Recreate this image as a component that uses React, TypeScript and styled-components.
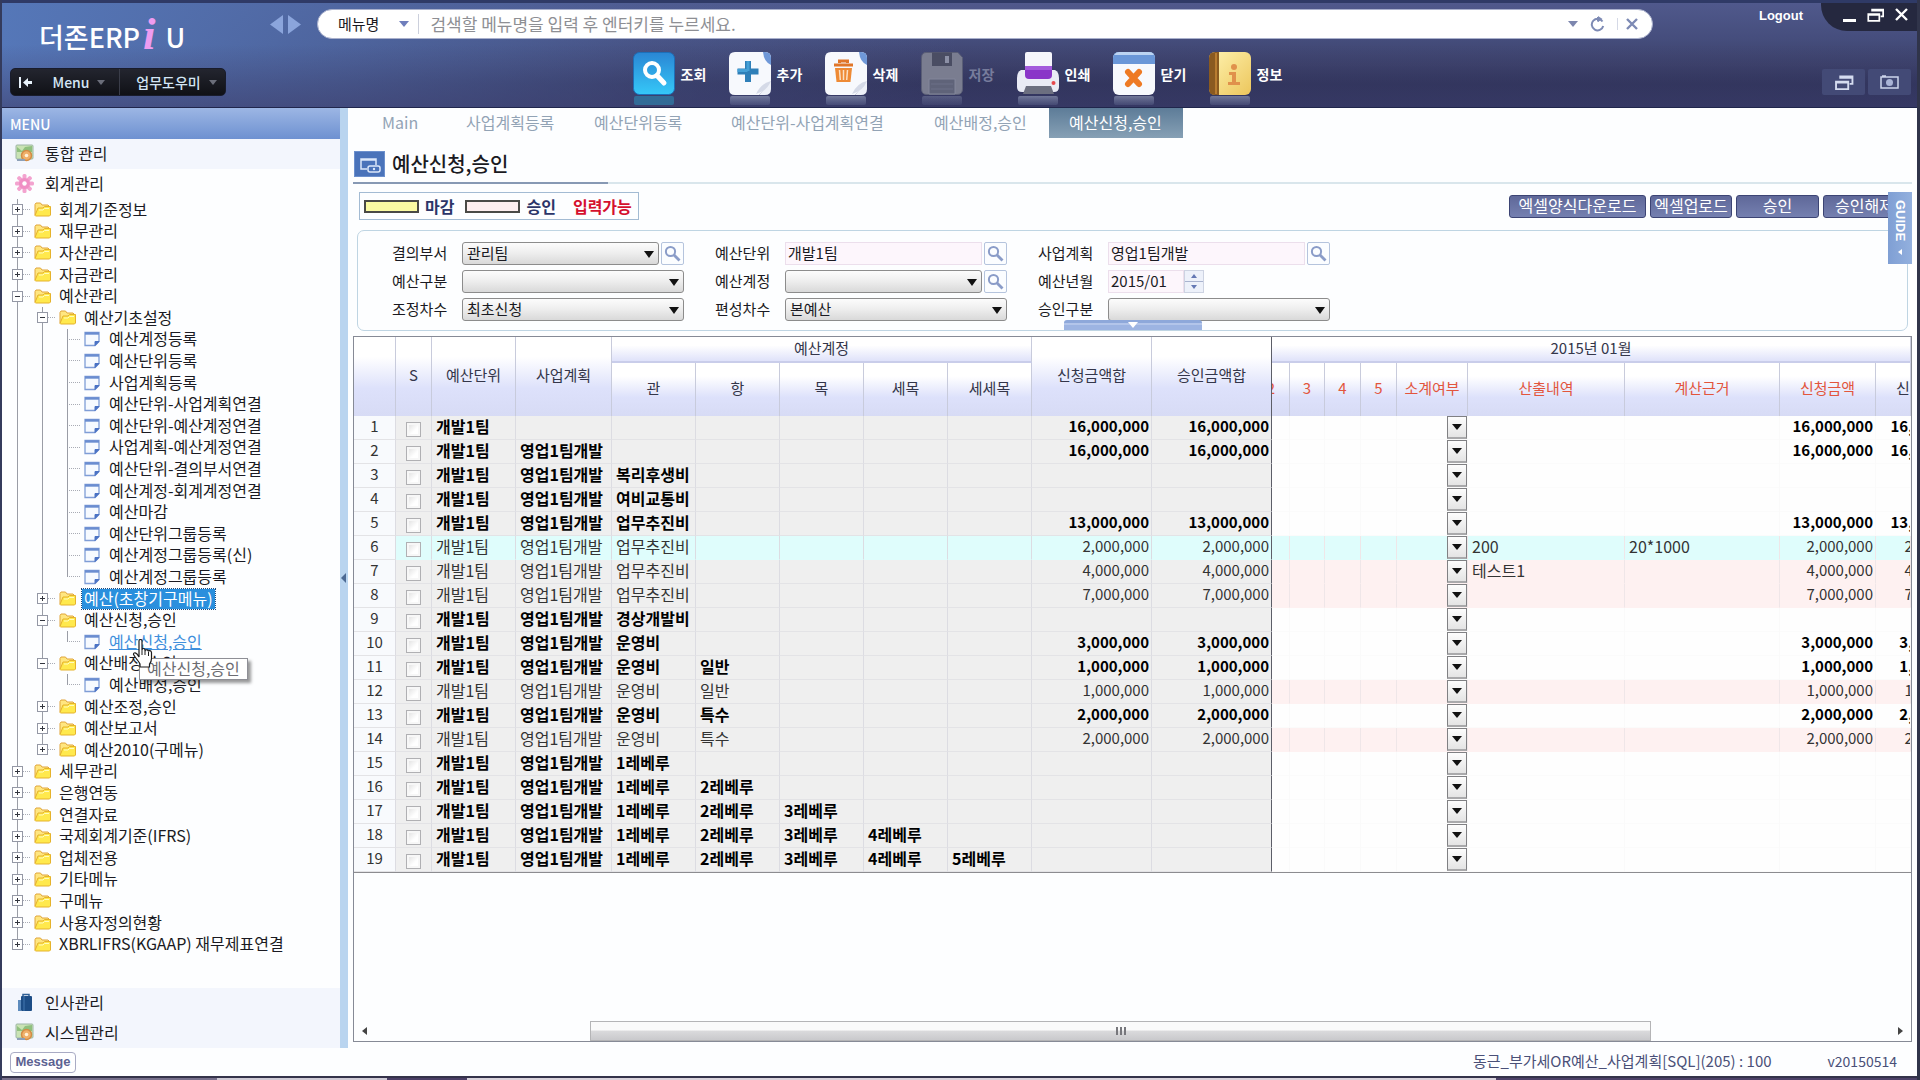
import React from "react";
import styled, { createGlobalStyle, css } from "styled-components";

const Global = createGlobalStyle`
  *, *::before, *::after { box-sizing: border-box; }
  body { margin: 0; }
  body, button, input, select, table {
    font-family: "Noto Sans CJK KR", "Noto Sans", sans-serif;
    font-size: 16px;
    line-height: 20px;
    color: #1a1a22;
  }
  button { padding: 0; border: 0; background: none; cursor: pointer; white-space: nowrap; }
  a { color: inherit; text-decoration: none; }
  ul { margin: 0; padding: 0; list-style: none; }
  svg { display: block; flex: none; }
`;

const Frame = styled.div`
  min-height: 100vh;
  display: flex;
  flex-direction: column;
  background: #fdfeff;
  border-left: 2px solid #343b5c;
  border-right: 3px solid #30344a;
`;

/* ---------- header ---------- */
const Header = styled.header`
  display: flex;
  height: 108px;
  flex: none;
  border-top: 3px solid #2f3a66;
  border-bottom: 1px solid #20264c;
  background:
    linear-gradient(180deg, rgba(62, 66, 114, 0) 40%, rgba(62, 62, 108, 0.6) 100%),
    linear-gradient(90deg, #5577b8 0%, rgba(80, 106, 166, 0.8) 18%, rgba(80, 100, 158, 0.35) 34%, rgba(80, 100, 158, 0) 50%),
    linear-gradient(180deg, #50598c 0%, #454d7c 35%, #3b4069 60%, #2c3156 78%, #2a3058 100%);
`;

const Brand = styled.div`
  width: 258px;
  padding: 9px 0 0 8px;
  display: flex;
  flex-direction: column;
`;

const Logo = styled.h1`
  margin: 0 0 0 29px;
  height: 56px;
  padding-bottom: 6px;
  display: flex;
  align-items: center;
  font-size: 27px;
  line-height: 32px;
  font-weight: 500;
  color: #fff;
`;

const LogoI = styled.em`
  margin: 0 10px 6px 3px;
  font: italic bold 45px/40px "Liberation Serif", serif;
  color: #ee9cf0;
`;

const MenuBar = styled.nav`
  display: flex;
  align-items: center;
  width: 216px;
  height: 28px;
  border-radius: 5px;
  background: linear-gradient(180deg, #23252f, #101116);
  border: 1px solid #191c2c;
`;

const MenuButton = styled.button<{ $w: number }>`
  display: flex;
  align-items: center;
  justify-content: center;
  gap: 8px;
  height: 26px;
  width: ${(p) => p.$w}px;
  font-size: 14px;
  font-weight: 500;
  color: #d5e6f5;
  & + & + & {
    padding-left: 8px;
    border-left: 1px solid #3a3d49;
  }
`;

const Caret = styled.span<{ $color?: string; $size?: number }>`
  display: block;
  width: 0;
  height: 0;
  flex: none;
  border-left: ${(p) => p.$size ?? 5}px solid transparent;
  border-right: ${(p) => p.$size ?? 5}px solid transparent;
  border-top: ${(p) => (p.$size ?? 5) + 1}px solid ${(p) => p.$color ?? "#8088a8"};
`;

const Center = styled.div`
  flex: 1;
  min-width: 0;
  display: flex;
  flex-direction: column;
  padding: 6px 0 0 10px;
`;

const SearchRow = styled.div`
  display: flex;
  align-items: center;
  gap: 16px;
`;

const HistoryButtons = styled.div`
  display: flex;
  gap: 5px;
`;

const SearchBox = styled.form`
  flex: 1;
  display: flex;
  align-items: center;
  height: 30px;
  padding: 0 14px 0 20px;
  border-radius: 15px;
  background: #fff;
  border: 1px solid #a9b0cc;
`;

const SearchKind = styled.button`
  display: flex;
  align-items: center;
  gap: 20px;
  padding-right: 9px;
  margin-right: 11px;
  border-right: 1px solid #ccd0dc;
  font-size: 15px;
`;

const SearchInput = styled.input`
  flex: 1;
  min-width: 0;
  padding: 0;
  border: 0;
  outline: 0;
  font-size: 17px;
  background: none;
  &::placeholder { color: #8e8f94; opacity: 1; }
`;

const SearchTools = styled.div`
  display: flex;
  align-items: center;
  gap: 12px;
  & > :last-child { padding-left: 8px; border-left: 1px solid #d5d9e6; }
`;

const ToolBar = styled.div`
  display: flex;
  justify-content: center;
  padding: 13px 8px 0 0;
  gap: 22px;
`;

const Tool = styled.button<{ $off?: boolean }>`
  display: flex;
  align-items: flex-start;
  gap: 6px;
  width: 74px;
  font-size: 14px;
  font-weight: 700;
  line-height: 44px;
  color: ${(p) => (p.$off ? "#777c9c" : "#fff")};
`;

const Corner = styled.div`
  width: 264px;
  display: flex;
  flex-direction: column;
  justify-content: space-between;
  align-items: flex-end;
  padding-bottom: 12px;
`;

const CornerTop = styled.div`
  display: flex;
  align-items: flex-start;
  gap: 18px;
`;

const Logout = styled.button`
  font: bold 13px/26px "Liberation Sans", sans-serif;
  color: #fff;
`;

const WindowButtons = styled.div`
  display: flex;
  align-items: center;
  gap: 11px;
  width: 96px;
  height: 28px;
  padding: 0 8px 5px 22px;
  border-radius: 0 0 0 26px;
  background: #25283f;
`;

const SmallButtons = styled.div`
  display: flex;
  gap: 3px;
  margin-right: 6px;
`;

const SmallButton = styled.button`
  display: grid;
  place-items: center;
  width: 43px;
  height: 26px;
  background: #434a76;
  border-radius: 2px;
`;

/* ---------- sidebar ---------- */
const Body = styled.div`
  flex: 1;
  display: flex;
  min-height: 0;
`;

const Sidebar = styled.aside`
  width: 338px;
  flex: none;
  display: flex;
  flex-direction: column;
`;

const SideTitle = styled.h2`
  margin: 0;
  height: 31px;
  padding-left: 8px;
  font-size: 14px;
  line-height: 32px;
  font-weight: 500;
  color: #fff;
  background: linear-gradient(180deg, #9cb6e4, #6e91d1);
`;

const Module = styled.button<{ $tint?: boolean }>`
  display: flex;
  align-items: center;
  gap: 11px;
  height: 30px;
  padding: 0 0 2px 13px;
  text-align: left;
  background: ${(p) => (p.$tint ? "#f3f6fd" : "transparent")};
`;

const Tree = styled.ul`
  flex: 1;
  display: grid;
  grid-auto-rows: 1fr;
  padding: 0 0 33px 3px;
`;

const TreeRow = styled.li`
  position: relative;
  display: flex;
  align-items: center;
  min-height: 0;
`;

const Guide = styled.span<{ $half?: boolean; $line?: boolean; $branch?: boolean }>`
  width: 25px;
  align-self: stretch;
  flex: none;
  display: grid;
  place-items: center;
  background:
    linear-gradient(#9a9da6, #9a9da6) 12px 0 / ${(p) => (p.$line ? "1px" : "0")} ${(p) => (p.$half ? "50%" : "100%")} no-repeat,
    repeating-linear-gradient(90deg, #a9acb5 0 1px, transparent 1px 2px) 12px 50% / ${(p) => (p.$branch ? "13px 1px" : "0 0")} no-repeat;
`;

const Expander = styled.button`
  display: grid;
  place-items: center;
  width: 11px;
  height: 11px;
  background: #fff;
  border: 1px solid #9498a5;
`;

const TreeIcon = styled.span`
  width: 29px;
  padding-left: 4px;
  flex: none;
`;

const TreeLink = styled.a<{ $selected?: boolean; $hot?: boolean }>`
  padding-bottom: 2px;
  line-height: 18px;
  white-space: nowrap;
  ${(p) => p.$selected && css`
    margin-left: -2px;
    padding: 0 2px 2px;
    color: #fff;
    background: #2a8fdd;
    outline: 1px dotted #1a4a80;
  `}
  ${(p) => p.$hot && css`
    color: #3f8fdc;
    text-decoration: underline;
  `}
`;

const Tooltip = styled.span`
  position: absolute;
  left: 134px;
  top: 27px;
  z-index: 2;
  height: 22px;
  padding: 0 7px;
  line-height: 18px;
  color: #6c6c72;
  background: #fff;
  border: 1px solid #8e8f96;
  box-shadow: 3px 3px 3px rgba(0, 0, 0, 0.4);
  white-space: nowrap;
`;

const Hand = styled.span`
  position: absolute;
  left: 127px;
  top: 8px;
  z-index: 3;
`;

const Splitter = styled.div`
  width: 8px;
  flex: none;
  display: flex;
  align-items: center;
  background: #b9d4ef;
`;

/* ---------- work area ---------- */
const Main = styled.main`
  position: relative;
  flex: 1;
  min-width: 0;
  display: flex;
  flex-direction: column;
  padding: 0 5px 6px;
`;

const Tabs = styled.nav`
  display: flex;
  height: 30px;
  padding-left: 9px;
`;

const Tab = styled.button<{ $w: number; $on?: boolean }>`
  width: ${(p) => p.$w}px;
  padding: 0 0 2px 20px;
  text-align: left;
  color: ${(p) => (p.$on ? "#fff" : "#92a3b5")};
  background: ${(p) => (p.$on ? "linear-gradient(180deg, #5d7c98, #86a0b5)" : "none")};
`;

const TitleRow = styled.div`
  display: flex;
  align-items: center;
  gap: 7px;
  height: 44px;
  padding: 9px 0 0 1px;
  svg { margin-bottom: 1px; }
  h2 { margin: 0 0 2px; font-size: 20px; line-height: 26px; font-weight: 500; }
`;

const Rule = styled.div`
  flex: none;
  height: 2px;
  background: linear-gradient(90deg, #8799b4 255px, #d9e6ec 255px);
`;

const ActionRow = styled.div`
  display: flex;
  justify-content: space-between;
  align-items: center;
  height: 44px;
  padding: 0 6px 0 6px;
`;

const Legend = styled.div`
  display: flex;
  align-items: center;
  height: 28px;
  padding: 0 6px 0 4px;
  border: 1px solid #a3bbd3;
  font-weight: 700;
  color: #2c3568;
`;

const Swatch = styled.span<{ $c: string }>`
  width: 55px;
  height: 13px;
  margin-right: 6px;
  background: ${(p) => p.$c};
  border: 2px solid #4a4a46;
`;

const LegendText = styled.span<{ $red?: boolean }>`
  margin-right: ${(p) => (p.$red ? 0 : 11)}px;
  margin-left: ${(p) => (p.$red ? 6 : 0)}px;
  color: ${(p) => (p.$red ? "#d5102e" : "inherit")};
`;

const Actions = styled.div`
  display: flex;
  gap: 4px;
`;

const ActionButton = styled.button<{ $w: number }>`
  width: ${(p) => p.$w}px;
  height: 23px;
  padding-bottom: 2px;
  line-height: 18px;
  color: #fff;
  font-size: 16px;
  border: 1px solid #3c4474;
  border-radius: 3px;
  background: linear-gradient(180deg, #5f6899, #7580b0);
`;

const GuideTab = styled.button`
  position: absolute;
  right: 5px;
  top: 84px;
  z-index: 2;
  display: flex;
  align-items: center;
  justify-content: center;
  gap: 7px;
  width: 24px;
  height: 72px;
  writing-mode: vertical-rl;
  font: bold 13px/22px "Liberation Sans", sans-serif;
  color: #fff;
  background: linear-gradient(90deg, #7f9fd4, #93b0de);
`;

const Panel = styled.section`
  position: relative;
  display: grid;
  grid-template-columns: repeat(3, 292px);
  column-gap: 31px;
  row-gap: 5px;
  height: 101px;
  margin: 2px 4px 5px 4px;
  padding: 11px 0 0 34px;
  align-content: start;
  border: 1px solid #bfd5e3;
  border-radius: 7px;
`;

const Field = styled.div`
  display: flex;
  align-items: center;
  height: 23px;
  label {
    width: 70px;
    flex: none;
    padding-bottom: 2px;
    font-size: 15px;
  }
`;

const SelectBox = styled.span`
  position: relative;
  flex: 1;
  display: flex;
  &::after {
    content: "";
    position: absolute;
    right: 5px;
    top: 9px;
    border: 5px solid transparent;
    border-top: 7px solid #111;
    border-bottom: 0;
    pointer-events: none;
  }
`;

const Select = styled.select`
  appearance: none;
  flex: 1;
  min-width: 0;
  height: 23px;
  padding: 0 20px 1px 4px;
  font-size: 15px;
  line-height: 20px;
  border: 1px solid #8c8c8c;
  border-radius: 3px;
  background: linear-gradient(180deg, #fcfcfc 0%, #ededed 50%, #d9d9d9 100%);
`;

const TextInput = styled.input<{ $short?: boolean }>`
  flex: ${(p) => (p.$short ? "none" : "1")};
  width: ${(p) => (p.$short ? "76px" : "auto")};
  min-width: 0;
  height: 23px;
  padding: 0 2px 2px;
  font-size: 15px;
  border: 1px solid #ecdfec;
  background: #fdf6fc;
`;

const LookupButton = styled.button`
  display: grid;
  place-items: center;
  width: 23px;
  height: 23px;
  margin-left: 2px;
  border: 1px solid #b5c4dd;
  border-radius: 2px;
  background: #fbfdff;
`;

const Spin = styled.span`
  display: flex;
  flex-direction: column;
  width: 20px;
  height: 23px;
  border: 1px solid #cdd3e2;
  button {
    flex: 1;
    display: grid;
    place-items: center;
    background: #edf1fa;
  }
  button + button { border-top: 1px solid #a9b3cf; }
`;

const PullTab = styled.button`
  position: absolute;
  left: 706px;
  bottom: 0;
  width: 138px;
  height: 10px;
  display: flex;
  justify-content: center;
  align-items: center;
  border-radius: 3px 3px 0 0;
  background: linear-gradient(180deg, #8ea8da 0 3px, #b3c5ea 3px 5px, #9db4e2 5px);
`;

/* ---------- data grid ---------- */
const GridBox = styled.section`
  flex: 1;
  display: flex;
  flex-direction: column;
  justify-content: space-between;
  border: 1px solid #868a96;
  overflow: hidden;
`;

const Table = styled.table`
  width: 100%;
  table-layout: fixed;
  border-collapse: separate;
  border-spacing: 0;
  border-bottom: 1px solid #8c8c90;
`;

const Th = styled.th<{ $red?: boolean; $edge?: boolean; $band?: boolean }>`
  padding: 0 0 ${(p) => (p.$band ? 2 : 4)}px;
  height: ${(p) => (p.$band ? 26 : 53)}px;
  font-size: 15px;
  font-weight: 400;
  overflow: hidden;
  white-space: nowrap;
  color: ${(p) => (p.$red ? "#e2553d" : "#34364a")};
  border-right: 1px solid ${(p) => (p.$edge ? "#5c5e68" : "#c8cbdc")};
  border-bottom: ${(p) => (p.$band ? "2px solid #c9cdea" : "0")};
  background: ${(p) =>
    p.$band
      ? "linear-gradient(180deg, #ffffff 35%, #dfe2fa)"
      : "linear-gradient(180deg, #ffffff 25%, #dde1fb 65%, #d7dbf5)"};
`;

type Tone = "line" | "frozen" | "open";

const Td = styled.td<{ $tone: Tone; $bold?: boolean; $right?: boolean; $edge?: boolean; $fill?: string; $control?: boolean }>`
  height: 24px;
  padding: 0 ${(p) => (p.$right ? 2 : 0)}px ${(p) => (p.$control ? 0 : 3)}px ${(p) => (p.$right || p.$tone === "line" ? 0 : 4)}px;
  overflow: hidden;
  white-space: nowrap;
  font-size: ${(p) => (p.$right || p.$tone === "line" ? 15 : 16)}px;
  font-weight: ${(p) => (p.$bold ? 700 : 400)};
  text-align: ${(p) => (p.$right ? "right" : p.$tone === "line" ? "center" : "left")};
  color: ${(p) => (p.$bold ? "#000" : "#333")};
  background: ${(p) => p.$fill ?? (p.$tone === "line" ? "#f8fafd" : p.$tone === "frozen" ? "#efefef" : "#fefefe")};
  border-right: 1px solid ${(p) => (p.$edge ? "#5c5e68" : p.$tone === "open" ? (p.$fill ? "#efe6e8" : "#fafafa") : "#dcdce2")};
  border-bottom: 1px solid ${(p) => (p.$tone === "open" ? p.$fill ?? "#fbfbfb" : p.$fill ?? "#e3e3e6")};
`;

const Check = styled.input`
  appearance: none;
  display: block;
  width: 15px;
  height: 15px;
  margin: 3px 0 0 6px;
  border: 1px solid #b0b0b3;
  background: linear-gradient(135deg, #dcdcdc, #ffffff 60%);
  box-shadow: inset 0 0 0 2px #f7f7f7;
`;

const DropButton = styled.button`
  display: flex;
  align-items: center;
  justify-content: center;
  width: 20px;
  height: 23px;
  margin-left: auto;
  border: 1px solid #808083;
  border-bottom: 2px solid #a9a9ab;
  background: linear-gradient(180deg, #fdfdfd, #e4e4e4);
`;

/* Content of a column that continues beyond a clipped edge. */
const Wide = styled.div<{ $w: number; $from: "left" | "right"; $right?: boolean }>`
  width: ${(p) => p.$w}px;
  margin-left: ${(p) => (p.$from === "left" ? -19 : 0)}px;
  font-size: 15px;
  text-align: ${(p) => (p.$right ? "right" : "center")};
`;

const ScrollBar = styled.div`
  display: flex;
  align-items: center;
  justify-content: space-between;
  height: 20px;
  padding: 0 8px;
`;

const Track = styled.div`
  flex: 1;
  padding: 0 247px 0 223px;
`;

const Thumb = styled.div`
  display: flex;
  justify-content: center;
  align-items: center;
  gap: 2px;
  height: 20px;
  border: 1px solid #b4b4b6;
  background: linear-gradient(180deg, #fafafa 0 45%, #dadadc 50%, #c9c9cc);
  i { width: 2px; height: 8px; background: #77777c; }
`;

/* ---------- footer ---------- */
const Footer = styled.footer`
  display: flex;
  align-items: center;
  height: 28px;
  padding: 0 20px 2px 8px;
  font-size: 15px;
  color: #4a5078;
`;

const Message = styled.button`
  width: 66px;
  height: 21px;
  margin: 2px auto 0 0;
  font: bold 13px/18px "Liberation Sans", sans-serif;
  color: #5c6292;
  border: 1px solid #a9abc4;
  border-radius: 4px;
  background: #fff;
`;

const Version = styled.span`
  margin-left: 56px;
  font-size: 14px;
`;

const Strip = styled.div`
  flex: none;
  height: 4px;
  border-top: 2px solid #34334a;
  background: linear-gradient(90deg, #77708c 215px, #cfcbd6 215px 385px, #4b3f66 385px 465px, #d9d3dc 465px 78%, #4d4168 78%);
`;

/* ---------- drawings ---------- */
const Tri = ({ d, w, h, c }: { d: string; w: number; h: number; c: string }) => (
  <svg width={w} height={h} viewBox={`0 0 ${w} ${h}`} aria-hidden="true"><path d={d} fill={c} /></svg>
);

const Lens = ({ c = "#8a9cc8", s = 17 }: { c?: string; s?: number }) => (
  <svg width={s} height={s} viewBox="0 0 17 17" fill="none" stroke={c} aria-hidden="true">
    <circle cx="6.5" cy="6.5" r="4.6" strokeWidth="2" />
    <path d="M10 10l5.5 5.5" strokeWidth="2.8" />
  </svg>
);

const Folder = () => (
  <svg width="17" height="15" viewBox="0 0 17 15" aria-hidden="true">
    <path d="M1 13V2.5L2 1h4.500l1.500 2H14l1 1v2" fill="#ffe680" stroke="#e0a53a" />
    <path d="M1 13.500L4 6h5l1.500-1.500H16.500V13l-1 1H1.500z" fill="#ffe94d" stroke="#e5b22c" />
    <path d="M5 8h4l1.500-1.500H15" fill="none" stroke="#fffbc0" />
  </svg>
);

const Doc = () => (
  <svg width="16" height="16" viewBox="0 0 16 16" aria-hidden="true">
    <path d="M1 1.500h14v9l-4 4H1z" fill="#f6faff" stroke="#7f9dd6" strokeWidth="1.300" />
    <path d="M1 2.500h14" stroke="#6a8dd0" strokeWidth="2.400" />
    <path d="M15 10.500h-4v4z" fill="#4a72c4" stroke="#4a72c4" />
  </svg>
);

const PictureIcon = () => (
  <svg width="19" height="19" viewBox="0 0 19 19" aria-hidden="true">
    <rect x="1" y="1" width="17" height="14" rx="1" fill="#c9e3b4" stroke="#9db6a5" />
    <path d="M2 3l5 4 3-4 7-1v6H2z" fill="#8fc07e" />
    <circle cx="11.500" cy="11.500" r="5" fill="#f0b06a" stroke="#d28c45" strokeWidth="1.500" />
    <circle cx="11.500" cy="11.500" r="1.800" fill="#fff2d8" />
    <path d="M2 16h8" stroke="#8da0b8" strokeWidth="2" />
  </svg>
);

const FlowerIcon = () => (
  <svg width="19" height="19" viewBox="0 0 19 19" aria-hidden="true">
    {[0, 45, 90, 135, 180, 225, 270, 315].map((a) => (
      <rect key={a} x="7.500" y="0" width="4" height="7" rx="1.500" fill="#f3a3cf" transform={`rotate(${a} 9.500 9.500)`} />
    ))}
    <circle cx="9.500" cy="9.500" r="5.500" fill="#f08fc4" />
    <circle cx="9.500" cy="9.500" r="2.200" fill="#fff" />
  </svg>
);

const CaseIcon = () => (
  <svg width="19" height="19" viewBox="0 0 19 19" aria-hidden="true">
    <path d="M8 4V1.500h6V4" fill="none" stroke="#2e5e94" strokeWidth="1.500" />
    <rect x="6" y="3" width="11" height="15" rx="1" fill="#1d4d86" />
    <path d="M3 7h3v11H3z" fill="#5d8bbd" />
    <path d="M9 3v15" stroke="#4578b0" />
  </svg>
);

const Glyphs: Record<string, React.ReactNode> = {
  find: (
    <>
      <rect x="0.500" y="0.500" width="41" height="42" rx="6" fill="url(#gBlue)" stroke="#1d6fb8" />
      <circle cx="19" cy="18" r="7" fill="none" stroke="#fff" strokeWidth="4" />
      <path d="M24 23.500l7 7.500" stroke="#fff" strokeWidth="5" strokeLinecap="round" />
    </>
  ),
  add: (
    <>
      <Sheet />
      <path d="M19 9v21M8.500 19.500h21" stroke="#2e7fb8" strokeWidth="6" />
      <path d="M19 9v10M8.500 18.500h10" stroke="#45a0d6" strokeWidth="3" />
    </>
  ),
  del: (
    <>
      <Sheet />
      <path d="M9 13h19M14.500 11V9h8v2" fill="none" stroke="#e0762a" strokeWidth="3" />
      <path d="M10 16h17l-1.500 14h-14z" fill="#ee8a35" />
      <path d="M14.500 18l.8 10M18.500 18v10M22.500 18l-.8 10" stroke="#fbe0c4" strokeWidth="1.500" />
    </>
  ),
  save: (
    <>
      <path d="M5 .5h32l4.500 5V37q0 5.500-5.500 5.500H6Q.5 42.500.5 37V6Q.5.5 5 .5z" fill="#7a7d90" stroke="#5a5e76" />
      <path d="M11 .5h20V14H11z" fill="#4a4d63" />
      <rect x="24" y="4" width="4" height="7" fill="#8c90a6" />
      <path d="M8 27h26v15H8z" fill="#5f6379" stroke="#83879b" />
      <path d="M10 32h22M10 37h22" stroke="#6d7188" />
    </>
  ),
  print: (
    <>
      <rect x="8" y="0" width="27" height="20" rx="2" fill="#f5f6fb" />
      <path d="M4 18h34q4 2 4 8v9q0 5-5 5H5q-5 0-5-5v-9q0-6 4-8z" fill="#e9ebf5" />
      <path d="M8 14h27v9q0 4-4 4H12q-4 0-4-4z" fill="#8a35c8" />
      <path d="M8 14h27v4H8z" fill="#a35bdc" />
      <path d="M9 34h25l3 8H6z" fill="#6c6f80" />
      <circle cx="36.500" cy="31" r="2" fill="#e5484d" />
    </>
  ),
  close: (
    <>
      <rect x="0" y="0" width="42" height="43" rx="6" fill="#f7f9fd" />
      <path d="M0 12V6q0-6 6-6h30q6 0 6 6v6z" fill="#6a97d8" />
      <path d="M1 3q2-3 5-3h30q4 0 5 3z" fill="#bcd4f2" />
      <path d="M15 20l11 12M26 20l-11 12" stroke="#ee7a24" strokeWidth="6" strokeLinecap="round" />
    </>
  ),
  info: (
    <>
      <rect x="0" y="0" width="42" height="43" rx="6" fill="url(#gGold)" />
      <path d="M6 0h4v43H6q-6 0-6-6V6q0-6 6-6z" fill="#8a5a20" />
      <path d="M7 1v41" stroke="#b97c30" strokeWidth="2" />
      <circle cx="25" cy="15" r="3" fill="#e0914c" />
      <path d="M20 20h7v10h4v3H19v-3h4v-7h-3z" fill="#e0914c" />
    </>
  ),
};

function Sheet() {
  return (
    <>
      <path d="M6 0h30q6 0 6 6v25L30 43H6q-6 0-6-6V6q0-6 6-6z" fill="#f7f9fd" />
      <path d="M42 29v8q0 6-6 6h-6z" fill="#eef1f8" />
      <path d="M34 0h2q6 0 6 6v7q-7-3-8-13z" fill="#6f98d8" />
      <path d="M42 29q-10 2-15 13 11-3 15-13z" fill="#d5dae7" />
    </>
  );
}

const ToolGlyph = ({ kind }: { kind: string }) => (
  <svg width="42" height="53" viewBox="0 0 42 53" aria-hidden="true">
    <defs>
      <linearGradient id="gBlue" x1="0" y1="0" x2="0" y2="1">
        <stop offset="0" stopColor="#2a86d4" />
        <stop offset="1" stopColor="#35c8f8" />
      </linearGradient>
      <linearGradient id="gGold" x1="0" y1="0" x2="1" y2="1">
        <stop offset="0" stopColor="#fff3b0" />
        <stop offset="1" stopColor="#ecc65c" />
      </linearGradient>
      <linearGradient id="gFade" x1="0" y1="0" x2="0" y2="1">
        <stop offset="0" stopColor="#a9b2ca" stopOpacity="0.75" />
        <stop offset="1" stopColor="#8d9cc0" stopOpacity="0.25" />
      </linearGradient>
    </defs>
    {Glyphs[kind]}
    <rect x="1" y="44" width="40" height="9" rx="2" fill={kind === "find" ? "#2f7fa8" : "url(#gFade)"} opacity={kind === "save" ? 0.4 : 0.7} />
  </svg>
);

const Restore = ({ w, h, c }: { w: number; h: number; c: string }) => (
  <svg width={w} height={h} viewBox="0 0 20 16" fill="none" stroke={c} strokeWidth="2" aria-hidden="true">
    <path d="M6 4V1.500h13v8h-3M6 3h13" />
    <path d="M1.500 7h13v8h-13zM1.500 8h13" />
  </svg>
);

const HandCursor = () => (
  <svg width="22" height="29" viewBox="0 0 22 29" aria-hidden="true">
    <path
      d="M7 2q0-1.500 1.500-1.500T10 2v9q0-1.500 1.500-1.500T13 11v1q.5-1.500 2-1.200t1.200 1.700q.5-1 1.800-.8t1.500 1.800v6q0 3-2 5.500v3H8v-3q-1-2-3-4.500t-3.500-5q0-2 1.700-1.700T7 18z"
      fill="#fff" stroke="#1c1c1c" strokeWidth="1.200"
    />
    <path d="M10 11v5M13 12v4M16.500 13v4" stroke="#1c1c1c" />
  </svg>
);

/* ---------- data ---------- */
const tools = [
  ["find", "조회"], ["add", "추가"], ["del", "삭제"], ["save", "저장"],
  ["print", "인쇄"], ["close", "닫기"], ["info", "정보"],
];

type Node = { level: 0 | 1 | 2; text: string; open?: boolean; last?: boolean };
const leaf = (text: string, last = false): Node => ({ level: 2, text, last });
const sub = (text: string, open = false, last = false): Node => ({ level: 1, text, open, last });
const top = (text: string, open = false, last = false): Node => ({ level: 0, text, open, last });

const tree: Node[] = [
  top("회계기준정보"), top("재무관리"), top("자산관리"), top("자금관리"), top("예산관리", true),
  sub("예산기초설정", true),
  leaf("예산계정등록"), leaf("예산단위등록"), leaf("사업계획등록"), leaf("예산단위-사업계획연결"),
  leaf("예산단위-예산계정연결"), leaf("사업계획-예산계정연결"), leaf("예산단위-결의부서연결"),
  leaf("예산계정-회계계정연결"), leaf("예산마감"), leaf("예산단위그룹등록"),
  leaf("예산계정그룹등록(신)"), leaf("예산계정그룹등록", true),
  sub("예산(초창기구메뉴)"), sub("예산신청,승인", true), leaf("예산신청,승인", true),
  sub("예산배정,승인", true), leaf("예산배정,승인", true),
  sub("예산조정,승인"), sub("예산보고서"), sub("예산2010(구메뉴)", false, true),
  top("세무관리"), top("은행연동"), top("연결자료"), top("국제회계기준(IFRS)"), top("업체전용"),
  top("기타메뉴"), top("구메뉴"), top("사용자정의현황"), top("XBRLIFRS(KGAAP) 재무제표연결", false, true),
];

const tabs: [string, number][] = [
  ["Main", 84], ["사업계획등록", 128], ["예산단위등록", 137], ["예산단위-사업계획연결", 203],
  ["예산배정,승인", 135], ["예산신청,승인", 134],
];

const columns = [42, 36, 84, 96, 84, 84, 84, 84, 84, 120, 120, 18, 35, 36, 36, 71, 157, 155, 96];

type Row = { plan?: boolean; acct?: string[]; sum?: string; bold?: boolean; note?: string; basis?: string; fill?: string };
const CYAN = "#dffdfc";
const PINK = "#fef1f1";
const rows: Row[] = [
  { plan: false, sum: "16,000,000", bold: true },
  { sum: "16,000,000", bold: true },
  { acct: ["복리후생비"], bold: true },
  { acct: ["여비교통비"], bold: true },
  { acct: ["업무추진비"], sum: "13,000,000", bold: true },
  { acct: ["업무추진비"], sum: "2,000,000", note: "200", basis: "20*1000", fill: CYAN },
  { acct: ["업무추진비"], sum: "4,000,000", note: "테스트1", fill: PINK },
  { acct: ["업무추진비"], sum: "7,000,000", fill: PINK },
  { acct: ["경상개발비"], bold: true },
  { acct: ["운영비"], sum: "3,000,000", bold: true },
  { acct: ["운영비", "일반"], sum: "1,000,000", bold: true },
  { acct: ["운영비", "일반"], sum: "1,000,000", fill: PINK },
  { acct: ["운영비", "특수"], sum: "2,000,000", bold: true },
  { acct: ["운영비", "특수"], sum: "2,000,000", fill: PINK },
  { acct: ["1레베루"], bold: true },
  { acct: ["1레베루", "2레베루"], bold: true },
  { acct: ["1레베루", "2레베루", "3레베루"], bold: true },
  { acct: ["1레베루", "2레베루", "3레베루", "4레베루"], bold: true },
  { acct: ["1레베루", "2레베루", "3레베루", "4레베루", "5레베루"], bold: true },
];

/* ---------- parts ---------- */
const PickField = ({ id, label, value = "", lookup }: { id: string; label: string; value?: string; lookup?: boolean }) => (
  <Field>
    <label htmlFor={id}>{label}</label>
    <SelectBox><Select id={id} defaultValue={value}><option>{value}</option></Select></SelectBox>
    {lookup && <LookupButton aria-label={`${label} 검색`}><Lens /></LookupButton>}
  </Field>
);

const CodeField = ({ id, label, value }: { id: string; label: string; value: string }) => (
  <Field>
    <label htmlFor={id}>{label}</label>
    <TextInput id={id} defaultValue={value} />
    <LookupButton aria-label={`${label} 검색`}><Lens /></LookupButton>
  </Field>
);

const TreeItem = ({ node }: { node: Node }) => {
  const hot = node.level === 2 && node.text === "예산신청,승인";
  const mark = (
    <Expander aria-label={node.open ? "접기" : "펼치기"}>
      <Tri w={7} h={7} c="#33363f" d={node.open ? "M1 3h5v1H1z" : "M1 3h2V1h1v2h2v1H4v2H3V4H1z"} />
    </Expander>
  );
  return (
    <TreeRow>
      {node.level > 0 && <Guide $line />}
      {node.level > 1 && <Guide $line />}
      <Guide $line $branch $half={node.last}>{node.level < 2 && mark}</Guide>
      <TreeIcon>{node.level === 2 ? <Doc /> : <Folder />}</TreeIcon>
      <TreeLink href="#" $selected={node.text === "예산(초창기구메뉴)"} $hot={hot}>{node.text}</TreeLink>
      {hot && <Hand><HandCursor /></Hand>}
      {hot && <Tooltip role="tooltip">{node.text}</Tooltip>}
    </TreeRow>
  );
};

const DataRow = ({ row, n }: { row: Row; n: number }) => {
  const cold = row.fill === CYAN ? CYAN : undefined;
  const frozen = { $tone: "frozen" as Tone, $bold: row.bold, $fill: cold };
  const open = { $tone: "open" as Tone, $bold: row.bold, $fill: row.fill };
  return (
    <tr>
      <Td $tone="line">{n}</Td>
      <Td {...frozen} $control><Check type="checkbox" aria-label={`${n}행 선택`} /></Td>
      <Td {...frozen}>개발1팀</Td>
      <Td {...frozen}>{row.plan === false ? "" : "영업1팀개발"}</Td>
      {[0, 1, 2, 3, 4].map((i) => <Td key={i} {...frozen}>{row.acct?.[i]}</Td>)}
      <Td {...frozen} $right>{row.sum}</Td>
      <Td {...frozen} $right $edge>{row.sum}</Td>
      <Td {...open} /><Td {...open} /><Td {...open} /><Td {...open} />
      <Td {...open} $control><DropButton aria-label={`${n}행 소계여부`}><Caret $color="#111" /></DropButton></Td>
      <Td {...open}>{row.note}</Td>
      <Td {...open}>{row.basis}</Td>
      <Td {...open} $right>{row.sum}</Td>
      <Td {...open}><Wide $w={91} $from="right" $right>{row.sum}</Wide></Td>
    </tr>
  );
};

export default function App() {
  return (
    <Frame>
      <Global />
      <Header>
        <Brand>
          <Logo>더존ERP<LogoI>i</LogoI>U</Logo>
          <MenuBar>
            <MenuButton $w={28} aria-label="메뉴 접기">
              <Tri w={13} h={11} c="#e8f2fb" d="M0 0h2v11H0zM4 5.500L9 1v3h4v3H9v3z" />
            </MenuButton>
            <MenuButton $w={80}>Menu <Caret $color="#6b6e7a" $size={4} /></MenuButton>
            <MenuButton $w={106}>업무도우미 <Caret $color="#6b6e7a" $size={4} /></MenuButton>
          </MenuBar>
        </Brand>
        <Center>
          <SearchRow>
            <HistoryButtons>
              <button aria-label="이전"><Tri w={13} h={19} c="#8ba5dc" d="M13 0v19L0 9.500z" /></button>
              <button aria-label="다음"><Tri w={13} h={19} c="#8ba5dc" d="M0 0v19l13-9.500z" /></button>
            </HistoryButtons>
            <SearchBox>
              <SearchKind type="button">메뉴명 <Caret $color="#6f7ebc" /></SearchKind>
              <SearchInput aria-label="메뉴 검색" placeholder="검색할 메뉴명을 입력 후 엔터키를 누르세요." />
              <SearchTools>
                <button type="button" aria-label="목록"><Caret $color="#7d86ae" /></button>
                <button type="button" aria-label="새로고침">
                  <svg width="15" height="16" viewBox="0 0 15 16" fill="none" stroke="#7d8ab4" strokeWidth="2">
                    <path d="M12.500 5.500A5.800 5.800 0 1 0 13.200 10M8 1v4.500" />
                    <path d="M8 0l4.500 3L8 6z" fill="#7d8ab4" stroke="none" />
                  </svg>
                </button>
                <button type="button" aria-label="지우기">
                  <svg width="12" height="12" viewBox="0 0 12 12" stroke="#7d8ab4" strokeWidth="2.400"><path d="M1 1l10 10M11 1L1 11" /></svg>
                </button>
              </SearchTools>
            </SearchBox>
          </SearchRow>
          <ToolBar>
            {tools.map(([kind, label]) => (
              <Tool key={kind} $off={kind === "save"}><ToolGlyph kind={kind} />{label}</Tool>
            ))}
          </ToolBar>
        </Center>
        <Corner>
          <CornerTop>
            <Logout>Logout</Logout>
            <WindowButtons>
              <button aria-label="최소화"><Tri w={13} h={15} c="#fff" d="M0 12h13v3H0z" /></button>
              <button aria-label="이전 크기"><Restore w={17} h={16} c="#fff" /></button>
              <button aria-label="창 닫기">
                <svg width="13" height="13" viewBox="0 0 13 13" stroke="#fff" strokeWidth="2.400"><path d="M1 1l11 11M12 1L1 12" /></svg>
              </button>
            </WindowButtons>
          </CornerTop>
          <SmallButtons>
            <SmallButton aria-label="창 목록"><Restore w={20} h={15} c="#d5dcf0" /></SmallButton>
            <SmallButton aria-label="화면 저장">
              <svg width="19" height="14" viewBox="0 0 19 14" fill="none" stroke="#cdd5ec" strokeWidth="1.500">
                <path d="M1 2h17v11H1zM2 1h4" /><circle cx="9.500" cy="7.500" r="3.500" fill="#aab4d6" stroke="none" />
              </svg>
            </SmallButton>
          </SmallButtons>
        </Corner>
      </Header>

      <Body>
        <Sidebar>
          <SideTitle>MENU</SideTitle>
          <Module $tint><PictureIcon />통합 관리</Module>
          <Module><FlowerIcon />회계관리</Module>
          <Tree>{tree.map((node, i) => <TreeItem key={i} node={node} />)}</Tree>
          <Module $tint><CaseIcon />인사관리</Module>
          <Module $tint><PictureIcon />시스템관리</Module>
        </Sidebar>
        <Splitter><Tri w={6} h={10} c="#4d6a94" d="M6 0v10L1 5z" /></Splitter>

        <Main>
          <Tabs>
            {tabs.map(([text, w], i) => <Tab key={text} $w={w} $on={i === 5}>{text}</Tab>)}
          </Tabs>
          <TitleRow>
            <svg width="31" height="26" viewBox="0 0 31 26" fill="none" aria-hidden="true">
              <rect width="31" height="26" fill="#4a73ba" />
              <rect x="0.500" y="0.500" width="30" height="25" stroke="#6c90cd" />
              <path d="M13 18H7V8h15v6M7 9h15" stroke="#dce8fa" strokeWidth="1.500" />
              <rect x="14" y="15" width="12" height="6" rx="2" stroke="#dce8fa" strokeWidth="1.500" />
              <circle cx="20" cy="18" r="1.200" fill="#dce8fa" />
            </svg>
            <h2>예산신청,승인</h2>
          </TitleRow>
          <Rule />
          <ActionRow>
            <Legend>
              <Swatch $c="#fbfba2" /><LegendText>마감</LegendText>
              <Swatch $c="#fdeeee" /><LegendText>승인</LegendText>
              <LegendText $red>입력가능</LegendText>
            </Legend>
            <Actions>
              <ActionButton $w={137}>엑셀양식다운로드</ActionButton>
              <ActionButton $w={82}>엑셀업로드</ActionButton>
              <ActionButton $w={83}>승인</ActionButton>
              <ActionButton $w={83}>승인해제</ActionButton>
            </Actions>
          </ActionRow>
          <GuideTab>GUIDE <Tri w={6} h={8} c="#fff" d="M5 1v6L1 4z" /></GuideTab>

          <Panel>
            <PickField id="dept" label="결의부서" value="관리팀" lookup />
            <CodeField id="unit" label="예산단위" value="개발1팀" />
            <CodeField id="plan" label="사업계획" value="영업1팀개발" />
            <PickField id="kind" label="예산구분" />
            <PickField id="account" label="예산계정" lookup />
            <Field>
              <label htmlFor="month">예산년월</label>
              <TextInput id="month" $short defaultValue="2015/01" />
              <Spin>
                <button aria-label="다음 달"><Tri w={6} h={4} c="#6478b4" d="M3 0l3 4H0z" /></button>
                <button aria-label="이전 달"><Tri w={6} h={4} c="#6478b4" d="M0 0h6L3 4z" /></button>
              </Spin>
            </Field>
            <PickField id="round" label="조정차수" value="최초신청" />
            <PickField id="draft" label="편성차수" value="본예산" />
            <PickField id="approval" label="승인구분" />
            <PullTab aria-label="조건 펼치기"><Caret $color="#fff" $size={5} /></PullTab>
          </Panel>

          <GridBox>
            <Table>
              <colgroup>
                {columns.map((w, i) => <col key={i} width={w} />)}
                <col />
              </colgroup>
              <thead>
                <tr>
                  <Th rowSpan={2} /><Th rowSpan={2}>S</Th>
                  <Th rowSpan={2}>예산단위</Th><Th rowSpan={2}>사업계획</Th>
                  <Th colSpan={5} $band>예산계정</Th>
                  <Th rowSpan={2}>신청금액합</Th><Th rowSpan={2} $edge>승인금액합</Th>
                  <Th colSpan={9} $band>2015년 01월</Th>
                </tr>
                <tr>
                  <Th>관</Th><Th>항</Th><Th>목</Th><Th>세목</Th><Th>세세목</Th>
                  <Th $red><Wide $w={36} $from="left">2</Wide></Th>
                  <Th $red>3</Th><Th $red>4</Th><Th $red>5</Th>
                  <Th $red>소계여부</Th><Th $red>산출내역</Th><Th $red>계산근거</Th><Th $red>신청금액</Th>
                  <Th><Wide $w={95} $from="right">신청금액</Wide></Th>
                </tr>
              </thead>
              <tbody>{rows.map((row, i) => <DataRow key={i} row={row} n={i + 1} />)}</tbody>
            </Table>
            <ScrollBar>
              <Tri w={5} h={8} c="#444" d="M5 0v8L0 4z" />
              <Track><Thumb><i /><i /><i /></Thumb></Track>
              <Tri w={5} h={8} c="#444" d="M0 0v8l5-4z" />
            </ScrollBar>
          </GridBox>
        </Main>
      </Body>

      <Footer>
        <Message>Message</Message>
        <span>동근_부가세OR예산_사업계획[SQL](205) : 100</span>
        <Version>v20150514</Version>
      </Footer>
      <Strip />
    </Frame>
  );
}
